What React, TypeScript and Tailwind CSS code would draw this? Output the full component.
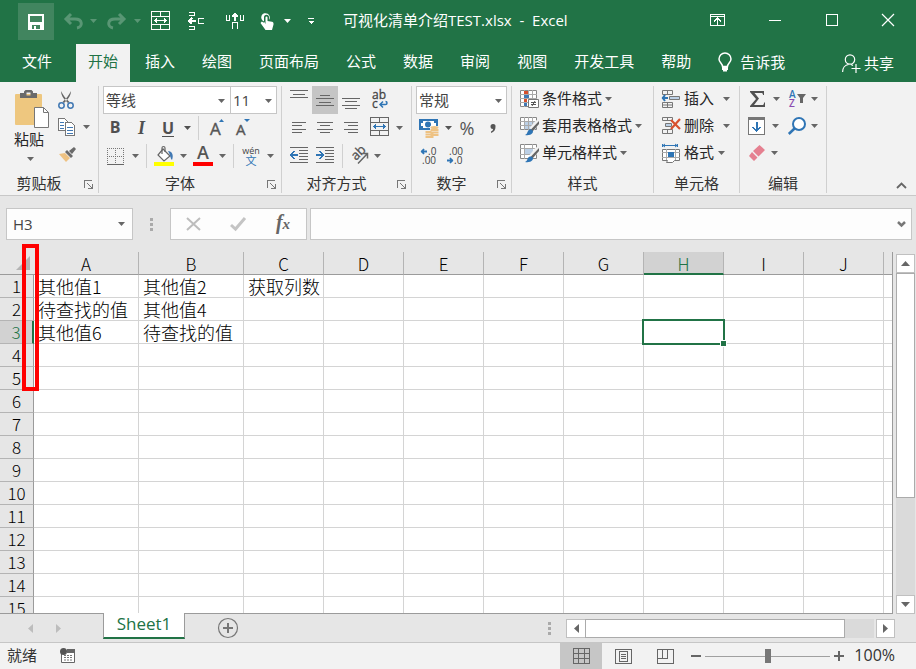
import type { ReactNode } from "react";

const tabs = ["插入", "绘图", "页面布局", "公式", "数据", "审阅", "视图", "开发工具", "帮助"];
const columns = ["A", "B", "C", "D", "E", "F", "G", "H", "I", "J"];
const rows = Array.from({ length: 15 }, (_, i) => i + 1);
const cells: Record<string, string> = {
  A1: "其他值1",
  B1: "其他值2",
  C1: "获取列数",
  A2: "待查找的值",
  B2: "其他值4",
  A3: "其他值6",
  B3: "待查找的值",
};

type IconProps = { w: number; h: number; children: ReactNode; crisp?: boolean };

const Icon = ({ w, h, children, crisp }: IconProps) => (
  <svg
    width={w}
    height={h}
    viewBox={`0 0 ${w} ${h}`}
    fill="none"
    className="shrink-0 overflow-visible"
    shapeRendering={crisp ? "crispEdges" : "auto"}
    aria-hidden="true"
  >
    {children}
  </svg>
);

const Caret = () => (
  <Icon w={7} h={4}>
    <path d="M0 0h7L3.5 4z" fill="currentColor" />
  </Icon>
);

const Tool = ({ label, className, children }: { label: string; className: string; children: ReactNode }) => (
  <button type="button" aria-label={label} className={`flex h-full shrink-0 items-center justify-center ${className}`}>
    {children}
  </button>
);

const Separator = ({ className }: { className: string }) => (
  <span className={`h-6 w-px shrink-0 bg-[#d0d0d0] ${className}`} />
);

const Group = ({
  title,
  launcher,
  className,
  children,
}: {
  title: string;
  launcher?: boolean;
  className: string;
  children: ReactNode;
}) => (
  <section className={`flex shrink-0 flex-col border-r border-[#d0d0d0] ${className}`}>
    <div className="h-[87px]">{children}</div>
    <div className="flex h-5 items-center">
      <h2 className="flex-1 text-center leading-5 text-[#333]">{title}</h2>
      {launcher && (
        <button type="button" aria-label={`${title}设置`} className="w-5 pt-[2px] pl-[6px]">
          <Icon w={9} h={9} crisp>
            <path d="M.5 8V.5H8M3 3l5 5M8.500 4v4.500H4" stroke="#777" />
          </Icon>
        </button>
      )}
    </div>
  </section>
);

// horizontal strokes used by the alignment icons: [x, y, width]
const Lines = ({ data, h = 14 }: { data: number[][]; h?: number }) => (
  <Icon w={18} h={h} crisp>
    {data.map(([x, y, w]) => (
      <rect key={y} x={x} y={y} width={w} height="1" fill="#666" />
    ))}
  </Icon>
);

const MergeIcon = ({ color, arrow }: { color: string; arrow: string }) => (
  <Icon w={19} h={19} crisp>
    <path d="M.5.5h18v18H.5zM.5 5.500h18M.5 13.500h18M9.500.5v5M9.500 13.500v5" stroke={color} />
    <path d="M3 9.500h13M5.500 7v5M4.500 8v3M13.500 7v5M14.500 8v3" stroke={arrow} />
  </Icon>
);

const TitleBar = () => (
  <header className="flex h-11 items-center bg-[#217346] pb-1 text-white">
    <button type="button" aria-label="保存" className="mt-[3px] ml-[18px] flex h-[37px] w-9 shrink-0 items-center justify-center bg-[#41855f]">
      <Icon w={16} h={16} crisp>
        <path d="M0 0h16v16H0zM2 2v6h12V2zM4 11v4h2v-3h2v3h4v-4z" fill="#fff" fillRule="evenodd" />
      </Icon>
    </button>
    <div className="flex h-full pt-px text-white">
      <Tool label="撤消" className="ml-2 w-[22px] opacity-25">
        <Icon w={19} h={16}>
          <path d="M7 1L2 6l5 5M2 6h9c8 0 8 8 2 9" stroke="#fff" strokeWidth="3" />
        </Icon>
      </Tool>
      <Tool label="撤消列表" className="w-[18px] opacity-25"><Caret /></Tool>
      <Tool label="恢复" className="w-7 opacity-25">
        <Icon w={19} h={16}>
          <path d="M12 1l5 5-5 5M17 6H8c-8 0-8 8-2 9" stroke="#fff" strokeWidth="3" />
        </Icon>
      </Tool>
      <Tool label="恢复列表" className="w-[14px] opacity-25"><Caret /></Tool>
      <Tool label="合并单元格" className="w-8">
        <MergeIcon color="#fff" arrow="#fff" />
      </Tool>
      <Tool label="插入单元格" className="w-10">
        <Icon w={16} h={19} crisp>
          <path d="M1 1.500h5.500v3H1M1 18.500h5.500v-3H1M16 7.500h-5.500v5H16" stroke="#fff" />
          <path d="M1 10h7M4 7L1 10l3 3" stroke="#fff" strokeWidth="2" />
        </Icon>
      </Tool>
      <Tool label="插入行" className="w-[38px]">
        <Icon w={18} h={16} crisp>
          <path d="M.5 2v5.500h3V2M14.500 2v5.500h3V2M6.500 16V9.500h5V16" stroke="#fff" />
          <path d="M9 1v7M6 4l3-3 3 3" stroke="#fff" strokeWidth="2" />
        </Icon>
      </Tool>
      <Tool label="触摸模式" className="w-[26px]">
        <Icon w={14} h={18}>
          <path
            d="M4 9.500A4.300 4.300 0 1 1 9 8V5.200a2.500 2.500 0 0 0-5 0v5.600L1.800 9.600.5 11l5 7H12l1.500-5.500c.3-1.800-.5-2.500-1.500-2.800L7.500 9V5.500a1 1 0 0 0-2 0V12"
            fill="#fff"
          />
        </Icon>
      </Tool>
      <Tool label="触摸列表" className="w-[14px]"><Caret /></Tool>
      <Tool label="自定义快速访问工具栏" className="w-[34px]">
        <Icon w={6} h={6} crisp>
          <path d="M0 0h6v1H0zM0 3h6L3 6z" fill="#fff" />
        </Icon>
      </Tool>
    </div>
    <h1 className="ml-[15px] flex-1 whitespace-pre leading-5">可视化清单介绍TEST.xlsx  -  Excel</h1>
    <Tool label="功能区显示选项" className="w-[58px]">
      <Icon w={15} h={12} crisp>
        <path d="M.5.5h14v11H.5zM0 2.500h15M7.500 4v7M4 7.500L7.500 4 11 7.500" stroke="#fff" />
      </Icon>
    </Tool>
    <Tool label="最小化" className="w-[58px]">
      <span className="h-px w-3 bg-white" />
    </Tool>
    <Tool label="最大化" className="w-14">
      <span className="size-3 border border-white" />
    </Tool>
    <Tool label="关闭" className="w-14">
      <Icon w={12} h={12}>
        <path d="M0 0l12 12M12 0L0 12" stroke="#fff" strokeWidth="1.200" />
      </Icon>
    </Tool>
  </header>
);

const TabBar = () => (
  <nav className="flex h-[38px] bg-[#217346] pl-[10px] text-white">
    <button type="button" className="mr-3 px-3 pb-[3px]">文件</button>
    <div className="flex gap-[3px]">
      <button type="button" className="bg-[#f2f2f2] px-3 pb-[3px] text-[#217346]">开始</button>
      {tabs.map((tab) => (
        <button key={tab} type="button" className="px-3 pb-[3px] whitespace-nowrap">{tab}</button>
      ))}
    </div>
    <button type="button" className="ml-[15px] flex flex-1 items-center gap-2 pb-[2px]">
      <Icon w={14} h={20}>
        <path d="M4.500 14.500c0-3-3.500-4-3.500-7.500a6 6 0 0 1 12 0c0 3.500-3.500 4.500-3.500 7.500z" stroke="#fff" strokeWidth="1.500" />
        <path d="M4 15h6v3H9v1.500H5V18H4z" fill="#fff" />
      </Icon>
      告诉我
    </button>
    <button type="button" className="mr-[22px] flex items-center gap-1">
      <Icon w={18} h={18}>
        <circle cx="8" cy="5.500" r="4.700" stroke="#fff" strokeWidth="1.200" />
        <path d="M.6 18c0-4 2.500-7 6-7.500M9 10.500l2 1M14 10v9M9.500 14.500h9" stroke="#fff" strokeWidth="1.200" />
      </Icon>
      共享
    </button>
  </nav>
);

const Clipboard = () => (
  <Group title="剪贴板" launcher className="w-[99px]">
    <div className="flex pl-[14px]">
      <button type="button" className="flex w-[38px] flex-col items-start pt-1">
        <Icon w={35} h={38}>
          <path d="M2 4h25a1 1 0 0 1 1 1v29a1 1 0 0 1-1 1H2a1 1 0 0 1-1-1V5a1 1 0 0 1 1-1z" fill="#eec77f" />
          <path d="M6 8V3h4V1.500L11.500 0h6L19 1.500V3h4v5zM12.500 2.500v3h4v-3z" fill="#6a6a6a" fillRule="evenodd" />
          <path d="M20.500 17.500h9l5 5v15h-14z" fill="#fff" stroke="#777" />
          <path d="M29.500 17.500v5h5" stroke="#777" />
        </Icon>
        <span className="leading-[22px]">粘贴</span>
        <span className="mt-[7px] pl-[13px] text-[#666]"><Caret /></span>
      </button>
      <div>
        <div className="flex h-[27px]">
          <Tool label="剪切" className="w-7">
            <Icon w={16} h={18}>
              <path d="M3 0c0 4 2 7 4.500 9.500L10 12l1.500-1C8 8 5 4 3 0zM13 0c0 4-2 7-4.500 9.500L6 12l-1.500-1C8 8 11 4 13 0z" fill="#666" />
              <circle cx="3.500" cy="14.500" r="2.700" stroke="#4178b3" strokeWidth="1.500" />
              <circle cx="12.500" cy="14.500" r="2.700" stroke="#4178b3" strokeWidth="1.500" />
            </Icon>
          </Tool>
        </div>
        <div className="flex h-[27px] text-[#666]">
          <Tool label="复制" className="w-7">
            <Icon w={17} h={18} crisp>
              <path d="M.5.5h6l4 4v8H.5z" fill="#fff" stroke="#777" />
              <path d="M2 4h4M2 7h4M2 10h4" stroke="#4178b3" />
              <path d="M7.500 4.500h6l3 3v10h-9z" fill="#fff" stroke="#777" />
              <path d="M9 9.500h6M9 12.500h6M9 15.500h6" stroke="#4178b3" />
            </Icon>
          </Tool>
          <Tool label="复制选项" className="w-3"><Caret /></Tool>
        </div>
        <div className="flex h-7">
          <Tool label="格式刷" className="w-[30px]">
            <Icon w={17} h={15}>
              <path d="M0 7l6-1 5 5-4 4-4-4.500z" fill="#eec283" />
              <path d="M6 5l2-2 6 6-2 2zM10 4l5-4 2 2-4 5z" fill="#6a6a6a" />
            </Icon>
          </Tool>
        </div>
      </div>
    </div>
  </Group>
);

const Font = () => (
  <Group title="字体" launcher className="w-[183px]">
    <div className="flex h-7 pl-1 text-[#666]">
      <div className="relative h-7 w-32 border border-[#c6c6c6] bg-white">
        <select aria-label="字体" className="h-full w-full appearance-none pl-[2px] text-[#444]">
          <option>等线</option>
        </select>
        <span className="pointer-events-none absolute top-3 right-[5px]"><Caret /></span>
      </div>
      <div className="relative -ml-px h-7 w-[47px] border border-[#c6c6c6] bg-white">
        <select aria-label="字号" className="h-full w-full appearance-none pl-[2px] text-[#444]">
          <option>11</option>
        </select>
        <span className="pointer-events-none absolute top-3 right-1"><Caret /></span>
      </div>
    </div>
    <div className="flex h-7 items-center pl-1 text-[#505050]">
      <Tool label="加粗" className="w-6 pb-[2px] text-base font-bold">B</Tool>
      <Tool label="倾斜" className="w-[29px] font-['Liberation_Serif',serif] text-[18px] font-bold italic">I</Tool>
      <Tool label="下划线" className="w-6 text-base font-bold"><span className="border-b border-[#505050] leading-4">U</span></Tool>
      <Tool label="下划线选项" className="w-[14px]"><Caret /></Tool>
      <Separator className="mx-1" />
      <Tool label="增大字号" className="w-7 pb-[2px]">
        <Icon w={14} h={17}>
          <text x="0" y="16" fontSize="17" fill="#555" stroke="#555" strokeWidth=".4">A</text>
          <path d="M9 3l2.500-3L14 3z" fill="#2f75b5" />
        </Icon>
      </Tool>
      <Tool label="减小字号" className="w-6 pb-[2px]">
        <Icon w={14} h={17}>
          <text x="0" y="16" fontSize="15" fill="#555" stroke="#555" strokeWidth=".4">A</text>
          <path d="M8 0h6l-3 3z" fill="#2f75b5" />
        </Icon>
      </Tool>
    </div>
    <div className="flex h-7 items-center pl-1 text-[#666]">
      <Tool label="边框" className="w-6">
        <Icon w={17} h={17} crisp>
          <path d="M.5 0v16M8.500 0v16M16.500 0v16M0 .5h17M0 8.500h17" stroke="#777" strokeDasharray="1 1" />
          <path d="M0 16.500h17" stroke="#666" />
        </Icon>
      </Tool>
      <Tool label="边框选项" className="w-4"><Caret /></Tool>
      <Separator className="mr-[5px] ml-[3px]" />
      <Tool label="填充颜色" className="w-6">
        <Icon w={20} h={20}>
          <path d="M9 3l7 7-6 5-6-6z" fill="#fff" stroke="#666" strokeWidth="1.200" />
          <path d="M8 8V2a1.500 1.500 0 0 1 3 0v4" stroke="#666" strokeWidth="1.200" />
          <path d="M14 5c4 0 6 4 4 9-2-2-1-4-4-9z" fill="#4178b3" />
          <path d="M0 16h20v4H0z" fill="#ff0" />
        </Icon>
      </Tool>
      <Tool label="填充颜色选项" className="w-[14px]"><Caret /></Tool>
      <Tool label="字体颜色" className="w-[26px]">
        <Icon w={20} h={20}>
          <text x="10" y="13" fontSize="18" fontWeight="600" textAnchor="middle" fill="#555">A</text>
          <path d="M0 16h20v4H0z" fill="#f00" />
        </Icon>
      </Tool>
      <Tool label="字体颜色选项" className="w-3"><Caret /></Tool>
      <Separator className="mx-[5px]" />
      <Tool label="拼音指南" className="w-6 flex-col">
        <span className="text-[9px] leading-[8px] text-[#444]">wén</span>
        <span className="text-[11px] leading-[11px] text-[#2f75b5]">文</span>
      </Tool>
      <Tool label="拼音选项" className="w-[14px]"><Caret /></Tool>
    </div>
  </Group>
);

const Indent = ({ flip }: { flip?: boolean }) => (
  <Icon w={18} h={16} crisp>
    <path d="M0 .5h18M9 3.500h9M9 6.500h9M9 9.500h9M9 12.500h9M0 15.500h18" stroke="#666" />
    <path
      d={flip ? "M8 8L5 4H3l2 3H0v2h5l-2 3h2z" : "M0 8l3-4h2L3 7h5v2H3l2 3H3z"}
      fill="#2f75b5"
    />
  </Icon>
);

const Alignment = () => (
  <Group title="对齐方式" launcher className="w-[130px]">
    <div className="flex h-7 pl-1">
      <Tool label="顶端对齐" className="w-[26px] pb-3"><Lines h={8} data={[[0, 0, 18], [3, 4, 12], [0, 7, 18]]} /></Tool>
      <Tool label="垂直居中" className="mb-px w-[26px] bg-[#c5c5c5]"><Lines h={11} data={[[4, 0, 10], [0, 3, 18], [3, 7, 12], [0, 10, 18]]} /></Tool>
      <Tool label="底端对齐" className="w-[26px] pt-[6px]"><Lines h={11} data={[[0, 0, 18], [3, 3, 12], [0, 7, 18], [3, 10, 12]]} /></Tool>
      <Tool label="自动换行" className="w-8">
        <Icon w={16} h={20}>
          <text x="0" y="9" fontSize="12" fill="#444" stroke="#444" strokeWidth=".3">ab</text>
          <text x="0" y="18" fontSize="12" fill="#444" stroke="#444" strokeWidth=".3">c</text>
          <path d="M8 14.500h5.500c2 0 2-3 0-3M11 11.500l-3 3 3 3" stroke="#2f75b5" strokeWidth="1.500" />
        </Icon>
      </Tool>
    </div>
    <div className="flex h-7 pl-1 text-[#666]">
      <Tool label="左对齐" className="w-[26px] pb-[2px]"><Lines h={11} data={[[2, 0, 14], [2, 3, 10], [2, 7, 14], [2, 10, 10]]} /></Tool>
      <Tool label="居中" className="w-[26px] pb-[2px]"><Lines h={11} data={[[1, 0, 16], [4, 3, 10], [1, 7, 16], [4, 10, 10]]} /></Tool>
      <Tool label="右对齐" className="w-[26px] pb-[2px]"><Lines h={11} data={[[2, 0, 14], [6, 3, 10], [2, 7, 14], [6, 10, 10]]} /></Tool>
      <Tool label="合并后居中" className="w-[30px] pb-[3px]"><MergeIcon color="#666" arrow="#2f75b5" /></Tool>
      <Tool label="合并选项" className="w-[10px]"><Caret /></Tool>
    </div>
    <div className="flex h-7 items-center pl-1 text-[#666]">
      <Tool label="减少缩进量" className="w-[26px] pb-[2px]"><Indent /></Tool>
      <Tool label="增加缩进量" className="w-[26px] pb-[2px]"><Indent flip /></Tool>
      <Separator className="mr-[3px] ml-1" />
      <Tool label="方向" className="w-[26px] pb-[2px]">
        <Icon w={19} h={17}>
          <text x="0" y="0" fontSize="13" fill="#555" stroke="#555" strokeWidth=".3" transform="translate(6 14) rotate(-45)">ab</text>
          <path d="M8 16.500l9-9.500M12.500 6.500h5v5" stroke="#666" strokeWidth="1.500" />
        </Icon>
      </Tool>
      <Tool label="方向选项" className="w-[10px]"><Caret /></Tool>
    </div>
  </Group>
);

const NumberGroup = () => (
  <Group title="数字" launcher className="w-[100px]">
    <div className="h-7 px-1 text-[#666]">
      <div className="relative h-7 border border-[#c6c6c6] bg-white">
        <select aria-label="数字格式" className="h-full w-full appearance-none pl-[2px] text-[#444]">
          <option>常规</option>
        </select>
        <span className="pointer-events-none absolute top-3 right-1"><Caret /></span>
      </div>
    </div>
    <div className="flex h-7 pl-1 text-[#555]">
      <Tool label="会计数字格式" className="w-[26px]">
        <Icon w={20} h={19}>
          <path d="M0 0h19v11H0z" fill="#2f75b5" />
          <path d="M2 2h15v7H2z" fill="#fff" />
          <circle cx="9" cy="5.500" r="3" fill="#2f75b5" />
          <path d="M0 0h4v4H0zM15 0h4v4h-4zM0 7h4v4H0z" fill="#2f75b5" />
          <path d="M11 7h9v10h-5v2H6v-6h5z" fill="#f2f2f2" />
          <ellipse cx="15.500" cy="8.500" rx="4" ry="1.500" fill="#eec283" />
          <path d="M11.500 11h8M11.500 13.500h8M11.500 16h8M6.500 13h6M6.500 15.500h8M6.500 18h8" stroke="#eec283" strokeWidth="1.800" />
        </Icon>
      </Tool>
      <Tool label="会计格式选项" className="w-3"><Caret /></Tool>
      <Tool label="百分比样式" className="w-[26px] text-[18px]">%</Tool>
      <Tool label="千位分隔样式" className="w-[26px]">
        <Icon w={6} h={9}>
          <path d="M3 0a2.500 2.500 0 0 1 2.500 2.800C5.500 6 4 8 1 9V7.500c1.500-.5 2-1.500 2-2.500A2.500 2.500 0 0 1 3 0z" fill="#555" />
        </Icon>
      </Tool>
    </div>
    <div className="flex h-7 pl-1">
      <Tool label="增加小数位数" className="w-[26px]">
        <Icon w={16} h={18}>
          <text x="7" y="8" fontSize="10" fill="#444">.0</text>
          <text x="1" y="17" fontSize="10" fill="#444">.00</text>
          <path d="M0 4.500h6M3 2L.8 4.500 3 7" stroke="#2f75b5" strokeWidth="1.800" />
        </Icon>
      </Tool>
      <Tool label="减少小数位数" className="w-[26px]">
        <Icon w={16} h={18}>
          <text x="2" y="8" fontSize="10" fill="#444">.00</text>
          <text x="7" y="17" fontSize="10" fill="#444">.0</text>
          <path d="M0 13.500h6M3 11l2.200 2.500L3 16" stroke="#2f75b5" strokeWidth="1.800" />
        </Icon>
      </Tool>
    </div>
  </Group>
);

const Brush = () => (
  <>
    <path d="M18 4.500l-6.500 8" stroke="#f2f2f2" strokeWidth="5" />
    <path d="M19 4l-8.500 9 2 1.500L19 7z" fill="#666" />
    <path d="M11 12.500c2 .5 2.500 2 1.500 3.500-1.500 2-4.500 2.500-7.500 2 2-1 2-2 3-4 .7-1.200 1.800-1.700 3-1.500z" fill="#2f75b5" />
  </>
);

const styleButtons = [
  {
    label: "条件格式",
    icon: (
      <>
        <path d="M.5.5h16v16H.5z" fill="#fff" stroke="#888" />
        <path d="M4.500 0v17M8.500 0v17M12.500 0v17M0 4.500h17M0 8.500h17M0 12.500h17" stroke="#aaa" />
        <path d="M4 1h4v3H4zM4 9h3v3H4z" fill="#d8502e" />
        <path d="M4 5h5v3H4zM4 13h3v3H4z" fill="#4178b3" />
        <path d="M8.500 9.500h10v8h-10z" fill="#fff" stroke="#777" />
        <path d="M11 12.500h5M11 14.500h5M15 11l-3 5" stroke="#555" />
      </>
    ),
  },
  {
    label: "套用表格格式",
    icon: (
      <>
        <path d="M.5.5h16v12H.5z" fill="#fff" stroke="#888" />
        <path d="M5 5h11v7H5z" fill="#bcd0e6" />
        <path d="M4.500 0v13M8.500 0v13M12.500 0v13M0 4.500h17M0 8.500h17" stroke="#aaa" />
        <Brush />
      </>
    ),
  },
  {
    label: "单元格样式",
    icon: (
      <>
        <path d="M.5.5h16v14H.5z" fill="#fff" stroke="#888" />
        <path d="M4.500 0v15M12.500 0v15M0 4.500h17M0 10.500h17" stroke="#aaa" />
        <path d="M5 5h8v5H5z" fill="#bcd0e6" />
        <Brush />
      </>
    ),
  },
];

const cellButtons = [
  {
    label: "插入",
    gap: "gap-[9px]",
    icon: (
      <>
        <path d="M.5.500h10v4H.5zM5.500.5v4M.5 12.500h10v5H.5zM5.500 12.500v5M.5 15h10" stroke="#777" />
        <path d="M7.500 6.500h10v3h-10z" fill="#bcd0e6" stroke="#777" />
        <path d="M0 8h6M3 5L.8 8 3 11" stroke="#2f75b5" strokeWidth="2" />
      </>
    ),
  },
  {
    label: "删除",
    gap: "gap-[9px]",
    icon: (
      <>
        <path d="M.5.500h10v3H.5zM5.500.5v3M.5 12.500h10v4H.5zM5.500 12.500v4" stroke="#777" />
        <path d="M3.500 6.500h6v3h-6z" fill="#bcd0e6" stroke="#777" />
        <path d="M9 3l9 9M18 2L9 12" stroke="#d8502e" strokeWidth="2.200" />
      </>
    ),
  },
  {
    label: "格式",
    gap: "gap-1",
    icon: (
      <>
        <path d="M1 1.500h14M.5 0v3M15.500 0v3M3 0L1 1.500 3 3M13 0l2 1.500L13 3" stroke="#2f75b5" />
        <path d="M.5 5.500h17v11h-5l-2 2h-6l1-2h-5z" fill="#fff" stroke="#777" />
        <path d="M4.500 5v11M13.500 5v11M0 8.500h18M0 13.500h18" stroke="#aaa" />
        <path d="M6 8h6v5H6z" fill="#2f75b5" />
      </>
    ),
  },
];

const Editing = () => (
  <Group title="编辑" className="w-[87px]">
    <div className="flex h-[27px] pb-[2px] pl-1 text-[#666]">
      <Tool label="自动求和" className="w-[26px]">
        <Icon w={15} h={16}>
          <path d="M0 0h14v4h-1c0-1.500-.5-2-2-2H4.500L9 7.500 4 14h8c1.500 0 2-.5 2-2.500h1V16H0v-1l6-7-6-7z" fill="#505050" />
        </Icon>
      </Tool>
      <Tool label="求和选项" className="w-3"><Caret /></Tool>
      <Tool label="排序和筛选" className="w-[30px]">
        <Icon w={17} h={16}>
          <text x="0" y="7" fontSize="10" fontWeight="600" fill="#2f75b5">A</text>
          <text x="0" y="16" fontSize="10" fontWeight="600" fill="#8a4ab0">Z</text>
          <path d="M8 3h9l-3 4v5h-3V7z" fill="#666" />
        </Icon>
      </Tool>
      <Tool label="排序选项" className="w-1"><Caret /></Tool>
    </div>
    <div className="flex h-[27px] pb-[2px] pl-1 text-[#666]">
      <Tool label="填充" className="w-6">
        <Icon w={17} h={18} crisp>
          <path d="M.5.5h16v17H.5z" fill="#fff" stroke="#777" />
          <path d="M0 0h17v3H0z" fill="#777" />
          <path d="M8.500 5v9M4.500 10l4 4 4-4" stroke="#2f75b5" strokeWidth="2" />
        </Icon>
      </Tool>
      <Tool label="填充选项" className="w-[14px]"><Caret /></Tool>
      <Tool label="查找和选择" className="w-[30px]">
        <Icon w={18} h={18}>
          <circle cx="11" cy="7" r="6" fill="#fff" stroke="#2f75b5" strokeWidth="2" />
          <path d="M6.500 11.500L.8 17" stroke="#2f75b5" strokeWidth="2.500" />
        </Icon>
      </Tool>
      <Tool label="查找选项" className="w-1"><Caret /></Tool>
    </div>
    <div className="flex h-[27px] pb-[2px] pl-1 text-[#666]">
      <Tool label="清除" className="w-[26px]">
        <Icon w={16} h={16}>
          <path d="M10.500 0L16 5 9.500 11.500 4 6zM3 7l5.500 5.500L5 16l-5-5z" fill="#e58090" />
        </Icon>
      </Tool>
      <Tool label="清除选项" className="w-2"><Caret /></Tool>
    </div>
  </Group>
);

const Ribbon = () => (
  <div className="flex h-[114px] border-b border-[#c8c8c8] bg-[#f2f2f2] pt-1 pb-[2px]">
    <Clipboard />
    <Font />
    <Alignment />
    <NumberGroup />
    <Group title="样式" className="w-[142px]">
      {styleButtons.map(({ label, icon }) => (
        <button key={label} type="button" className="flex h-[27px] items-center gap-[3px] pb-[2px] pl-2 whitespace-nowrap">
          <Icon w={19} h={18}>{icon}</Icon>
          {label}
          <span className="text-[#666]"><Caret /></span>
        </button>
      ))}
    </Group>
    <Group title="单元格" className="w-[86px]">
      {cellButtons.map(({ label, gap, icon }) => (
        <button key={label} type="button" className={`flex h-[27px] items-center pb-[2px] pl-2 whitespace-nowrap ${gap}`}>
          <span className="flex items-center gap-[3px]">
            <Icon w={19} h={18}>{icon}</Icon>
            {label}
          </span>
          <span className="text-[#666]"><Caret /></span>
        </button>
      ))}
    </Group>
    <Editing />
    <button type="button" aria-label="折叠功能区" className="mr-[9px] mb-1 ml-auto self-end">
      <Icon w={11} h={7}>
        <path d="M1 6l4.500-4.500L10 6" stroke="#666" strokeWidth="1.800" />
      </Icon>
    </button>
  </div>
);

const Dots = () => (
  <span className="flex flex-col gap-[2px]">
    <span className="size-[3px] bg-[#aaa]" />
    <span className="size-[3px] bg-[#aaa]" />
    <span className="size-[3px] bg-[#aaa]" />
  </span>
);

const FormulaBar = () => (
  <div className="flex h-14 items-center pr-1 pl-[6px]">
    <div className="flex h-8 w-[127px] items-center border border-[#c6c6c6] bg-[#fdfdfd] pr-[7px] text-[#666]">
      <input aria-label="名称框" defaultValue="H3" className="w-full min-w-0 pl-[6px] text-[#444] outline-none" />
      <button type="button" aria-label="名称列表"><Caret /></button>
    </div>
    <span className="mx-[17px]"><Dots /></span>
    <div className="flex h-8 w-[137px] items-center border border-[#c6c6c6] bg-[#fdfdfd]">
      <Tool label="取消" className="w-11">
        <Icon w={15} h={14}>
          <path d="M1 1l13 12M14 1L1 13" stroke="#bdbdbd" strokeWidth="2" />
        </Icon>
      </Tool>
      <Tool label="输入" className="w-[46px]">
        <Icon w={16} h={14}>
          <path d="M1 8l4.500 4L15 1" stroke="#c4c4c4" strokeWidth="3" />
        </Icon>
      </Tool>
      <Tool label="插入函数" className="w-11 pb-1 font-['Liberation_Serif',serif] text-[20px] font-bold text-[#666] italic">
        f<span className="pt-1 text-[15px]">x</span>
      </Tool>
    </div>
    <div className="ml-[3px] flex h-8 min-w-0 flex-1 items-center border border-[#c6c6c6] bg-[#fdfdfd] pr-[5px]">
      <input aria-label="编辑栏" className="min-w-0 flex-1 px-1 outline-none" />
      <button type="button" aria-label="展开编辑栏">
        <Icon w={9} h={6}>
          <path d="M1 1l3.500 3.500L8 1" stroke="#777" strokeWidth="2.500" />
        </Icon>
      </button>
    </div>
  </div>
);

const Sheet = () => (
  <div className="relative flex min-h-0 flex-1">
    <div className="min-w-0 flex-1 overflow-hidden border-r border-b border-[#9b9b9b]">
      <table className="w-full table-fixed border-separate border-spacing-0 font-['Noto_Sans_CJK_SC',sans-serif] text-[18px] font-light text-black">
        <colgroup>
          <col className="w-[34px]" />
          {columns.map((col) => (
            <col key={col} className={col < "C" ? "w-[105px]" : "w-20"} />
          ))}
          <col />
        </colgroup>
        <thead>
          <tr className="h-[23px] leading-[18px]">
            <td className="border-b border-[#9b9b9b] bg-[#e6e6e6] p-0 pr-[4px]">
              <span className="flex justify-end">
                <Icon w={14} h={14}>
                  <path d="M14 0v14H0z" fill="#b4b4b4" />
                </Icon>
              </span>
            </td>
            {columns.map((col) => (
              <th
                key={col}
                scope="col"
                className={`border-r border-r-[#b4b4b4] p-0 pt-[2px] text-[17px] font-light ${
                  col === "H" ? "border-b-2 border-b-[#217346] bg-[#d2d2d2] text-[#217346]" : "border-b border-b-[#9b9b9b]"
                }`}
              >
                {col}
              </th>
            ))}
            <td className="border-b border-[#9b9b9b]" />
          </tr>
        </thead>
        <tbody>
          {rows.map((row) => (
            <tr key={row} className="h-[23px] leading-[22px]">
              <th
                scope="row"
                className={`border-b border-b-[#b4b4b4] p-0 text-[17px] font-light ${
                  row === 3 ? "border-r-2 border-r-[#217346] bg-[#d2d2d2] text-[#217346]" : "border-r border-r-[#9b9b9b] bg-[#e6e6e6]"
                }`}
              >
                {row}
              </th>
              {columns.map((col) => (
                <td key={col} className="relative border-r border-b border-[#d4d4d4] bg-white p-0 pl-1 whitespace-nowrap">
                  {cells[col + row]}
                  {col === "H" && row === 3 && (
                    <span className="absolute -inset-[2px] z-10 border-2 border-[#217346]">
                      <span className="absolute -right-[4px] -bottom-[4px] size-[7px] border border-white bg-[#217346]" />
                    </span>
                  )}
                </td>
              ))}
              <td className="border-b border-[#d4d4d4] bg-white" />
            </tr>
          ))}
        </tbody>
      </table>
    </div>
    <div className="ml-[3px] flex w-5 flex-col pt-[2px]">
      <button type="button" aria-label="向上滚动" className="flex h-[19px] w-[19px] items-center justify-center border border-[#c0c0c0] bg-white">
        <Icon w={9} h={5}><path d="M0 5h9L4.500 0z" fill="#666" /></Icon>
      </button>
      <div className="min-h-0 w-[19px] flex-1 bg-[#dadada]">
        <div className="h-[70%] border border-[#ababab] bg-white" />
      </div>
      <button type="button" aria-label="向下滚动" className="flex h-[19px] w-[19px] items-center justify-center border border-[#c0c0c0] bg-white">
        <Icon w={9} h={5}><path d="M0 0h9L4.500 5z" fill="#666" /></Icon>
      </button>
    </div>
    <div className="pointer-events-none absolute -top-2 left-[22px] z-20 h-[147px] w-[17px] border-4 border-[#f00]" />
  </div>
);

const SheetBar = () => (
  <div className="flex h-7 items-center">
    <Tool label="上一张" className="ml-[22px] w-4">
      <Icon w={5} h={9}><path d="M5 0v9L0 4.500z" fill="#bdbdbd" /></Icon>
    </Tool>
    <Tool label="下一张" className="ml-3 w-4">
      <Icon w={5} h={9}><path d="M0 0v9l5-4.500z" fill="#bdbdbd" /></Icon>
    </Tool>
    <button
      type="button"
      className="z-10 mt-[-1px] ml-[37px] h-[26px] w-[82px] self-start border-x border-b-2 border-x-[#9b9b9b] border-b-[#217346] bg-white pb-[3px] text-[17px] leading-5 text-[#217346]"
    >
      Sheet1
    </button>
    <button type="button" aria-label="新工作表" className="ml-8">
      <Icon w={22} h={22}>
        <circle cx="11" cy="11" r="9.500" stroke="#777" strokeWidth="1.200" />
        <path d="M11 6v10M6 11h10" stroke="#777" strokeWidth="2" />
      </Icon>
    </button>
    <span className="ml-auto"><Dots /></span>
    <div className="mr-[21px] ml-[15px] flex h-[19px] w-[329px] text-[#666]">
      <button type="button" aria-label="向左滚动" className="flex w-5 items-center justify-center border border-[#c0c0c0] bg-white">
        <Icon w={5} h={9}><path d="M5 0v9L0 4.500z" fill="#666" /></Icon>
      </button>
      <div className="mr-[2px] -ml-px flex-1 bg-[#dadada]">
        <div className="h-full w-[90%] border border-[#ababab] bg-white" />
      </div>
      <button type="button" aria-label="向右滚动" className="flex w-[19px] items-center justify-center border border-[#c0c0c0] bg-white">
        <Icon w={5} h={9}><path d="M0 0v9l5-4.500z" fill="#666" /></Icon>
      </button>
    </div>
  </div>
);

const StatusBar = () => (
  <footer className="flex h-[27px] items-center border-t border-[#c6c6c6] bg-[#f2f2f2] pl-[7px] text-[#333]">
    <span className="pb-[2px]">就绪</span>
    <Tool label="录制宏" className="ml-[22px] w-4 pb-[2px]">
      <Icon w={15} h={15}>
        <path d="M1.500 4v10.500h13V4" fill="#fff" stroke="#666" />
        <path d="M7 1h8v4H7z" fill="#666" />
        <path d="M4 7.500h9M4 9.500h9M4 12h9" stroke="#777" strokeDasharray="2 1" />
        <circle cx="3.500" cy="3.500" r="3.500" fill="#555" />
      </Icon>
    </Tool>
    <div className="ml-auto flex h-full">
      <Tool label="普通" className="w-[42px] bg-[#c6c6c6]">
        <Icon w={17} h={16} crisp>
          <path d="M.5.5h16v15H.5zM5.500 0v16M11.500 0v16M0 5.500h17M0 10.500h17" stroke="#666" />
        </Icon>
      </Tool>
      <Tool label="页面布局" className="w-[42px]">
        <Icon w={17} h={15} crisp>
          <path d="M.5.5h16v14H.5zM4.500 2.500h8v10h-8zM6 5.500h5M6 7.500h5M6 9.500h5" stroke="#666" />
        </Icon>
      </Tool>
      <Tool label="分页预览" className="w-[42px]">
        <Icon w={17} h={15} crisp>
          <path d="M.5.5h16v14H.5zM5.500 0v9M10.500 0v9M0 9.500h11" stroke="#666" />
        </Icon>
      </Tool>
    </div>
    <Tool label="缩小" className="ml-[5px] w-[10px]"><span className="h-[2px] w-[10px] bg-[#666]" /></Tool>
    <input
      type="range"
      aria-label="缩放"
      defaultValue={50}
      className="mx-1 h-[14px] w-[125px] appearance-none bg-transparent bg-linear-to-b from-[#a0a0a0] to-[#a0a0a0] bg-[length:100%_1px] bg-center bg-no-repeat [&::-webkit-slider-thumb]:h-[14px] [&::-webkit-slider-thumb]:w-[6px] [&::-webkit-slider-thumb]:appearance-none [&::-webkit-slider-thumb]:bg-[#777]"
    />
    <Tool label="放大" className="w-[10px]">
      <Icon w={10} h={10} crisp><path d="M5 0v10M0 5h10" stroke="#666" strokeWidth="2" /></Icon>
    </Tool>
    <button type="button" className="w-[72px] pr-[21px] pb-[2px] text-right text-base">100%</button>
  </footer>
);

export default function App() {
  return (
    <div className="flex h-screen flex-col overflow-hidden bg-[#e6e6e6] font-['Open_Sans','Noto_Sans_CJK_SC',sans-serif] text-[15px] text-[#262626]">
      <TitleBar />
      <TabBar />
      <Ribbon />
      <FormulaBar />
      <Sheet />
      <SheetBar />
      <StatusBar />
    </div>
  );
}
